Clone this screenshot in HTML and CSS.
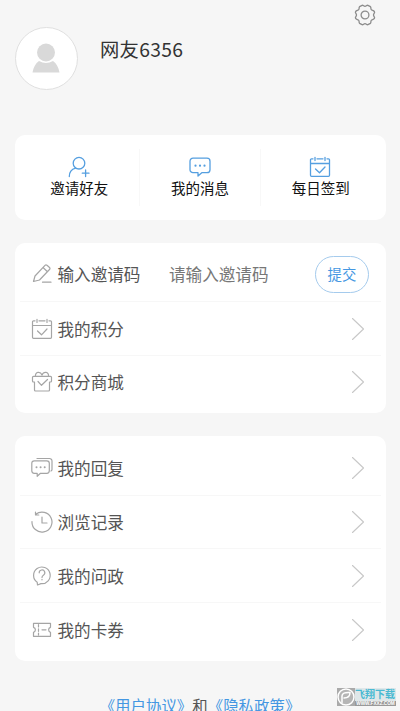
FILE: index.html
```html
<!DOCTYPE html>
<html lang="zh-CN">
<head>
<meta charset="utf-8">
<title>我的</title>
<link rel="stylesheet" href="styles.css">
</head>
<body>
<svg class="defs" width="0" height="0">
  <symbol id="arrow" viewBox="0 0 14 24"><path d="M1.500 1.500 12.500 12 1.500 22.500"/></symbol>
  <symbol id="calendar" viewBox="0 0 22 22"><path d="M4 2.800H2.500a1 1 0 0 0-1 1v15.500a1 1 0 0 0 1 1h17a1 1 0 0 0 1-1V3.800a1 1 0 0 0-1-1H18M8 2.800h6M1.500 7.500h19M6 1.300v3.200M16 1.300v3.200M6.500 13l4 3.800 5.500-5.800"/></symbol>
</svg>
<main class="page">
  <header class="profile">
    <div class="avatar">
      <svg width="28" height="30" viewBox="0 0 28 30"><circle cx="14" cy="9.500" r="9"/><path d="M.5 29.500C1.500 24 3.500 20.500 7 18q7 4 14 0c3.500 2.500 5.500 6 6.500 11.500z"/></svg>
    </div>
    <h1 class="name">网友6356</h1>
    <svg class="settings" width="22" height="22" viewBox="0 0 22 22"><path d="M8.100 1.300C9.500 1 9.600 2.300 11 2.300S12.500 1 13.900 1.300L16.400 2.600C17.300 3.600 16.500 4.300 17.200 5.500 17.900 6.700 19.500 6.200 20.400 7.600 21.300 9 19.500 9.500 19.500 11S21.300 13 20.400 14.400C19.500 15.800 17.900 15.300 17.200 16.500 16.500 17.700 17.300 18.400 16.400 19.400L13.900 20.700C12.500 21 12.400 19.700 11 19.700S9.500 21 8.100 20.700L5.600 19.400C4.700 18.400 5.500 17.700 4.800 16.500 4.100 15.300 2.500 15.800 1.600 14.400.7 13 2.500 12.500 2.500 11S.7 9 1.600 7.600C2.500 6.200 4.100 6.700 4.800 5.500 5.500 4.300 4.700 3.600 5.600 2.600z"/><circle cx="11" cy="11" r="3.900"/></svg>
  </header>

  <section class="card shortcuts">
    <a class="shortcut"><svg width="22" height="22" viewBox="0 0 22 22"><circle cx="11" cy="7.200" r="5.800"/><path d="M1.300 20.500c0-4.500 2.400-7.200 6.200-8.300M14.300 17.200h6.700M17.600 13.900v6.700"/></svg><span>邀请好友</span></a>
    <a class="shortcut"><svg width="22" height="22" viewBox="0 0 22 22"><path d="M4 2.200h14a3 3 0 0 1 3 3v8.500a3 3 0 0 1-3 3h-5.200L9 20v-3.300H4a3 3 0 0 1-3-3V5.200a3 3 0 0 1 3-3z"/><path class="dots" d="M6.500 9.700h.01M11 9.700h.01M15.500 9.700h.01"/></svg><span>我的消息</span></a>
    <a class="shortcut"><svg width="22" height="22"><use href="#calendar"/></svg><span>每日签到</span></a>
  </section>

  <section class="card menu">
    <div class="row">
      <svg class="icon" width="22" height="22" viewBox="0 0 22 22"><path d="M2.500 18.500 4 13 14 2.300q1-1 2 0l2.500 2.200q1 1 0 2L8.500 17zM12 4.500l4.500 4.200M11.500 19.200h8.500"/></svg>
      <span class="label">输入邀请码</span><span class="hint">请输入邀请码</span><button class="submit">提交</button>
    </div>
    <div class="row"><svg class="icon" width="22" height="22"><use href="#calendar"/></svg><span class="label">我的积分</span><svg class="arrow" width="14" height="24"><use href="#arrow"/></svg></div>
    <div class="row"><svg class="icon" width="22" height="22" viewBox="0 0 22 22"><path d="M3.500 11H2.500a1 1 0 0 1-1-1V6.300a1 1 0 0 1 1-1h17a1 1 0 0 1 1 1V10a1 1 0 0 1-1 1h-1M3.500 11v8a1 1 0 0 0 1 1h13a1 1 0 0 0 1-1v-8M4.500 5.300C3.800.5 9.500.3 11 4 12.500.3 18.200.5 17.500 5.300M7 10.500l3.500 3.800 6-5.800"/></svg><span class="label">积分商城</span><svg class="arrow" width="14" height="24"><use href="#arrow"/></svg></div>
  </section>

  <section class="card menu">
    <div class="row"><svg class="icon" width="22" height="22" viewBox="0 0 22 22"><path d="M3.300 3.800h12.500a2.500 2.500 0 0 1 2.500 2.500v7.500a2.500 2.500 0 0 1-2.500 2.500H9.500l-3.300 3v-3H3.300a2.500 2.500 0 0 1-2.500-2.500V6.300a2.500 2.500 0 0 1 2.500-2.500zM6 1.500h12.500A2.500 2.500 0 0 1 21 4v8.500q0 1-1 1.500"/><path class="dots" d="M5.500 10.200h.01M9.600 10.200h.01M13.700 10.200h.01"/></svg><span class="label">我的回复</span><svg class="arrow" width="14" height="24"><use href="#arrow"/></svg></div>
    <div class="row"><svg class="icon" width="22" height="22" viewBox="0 0 22 22"><path d="M1 10.500A10 10 0 1 0 4.800 3.200M4.500 1v3h3.300M11 6v6h5"/></svg><span class="label">浏览记录</span><svg class="arrow" width="14" height="24"><use href="#arrow"/></svg></div>
    <div class="row"><svg class="icon" width="22" height="22" viewBox="0 0 22 22"><path d="M6.200 17.200A8.300 8.300 0 1 1 10 18.600L6.500 20zM8.200 7.800a2.800 2.800 0 1 1 4.200 2.400Q11 11 11 12.500M11 14.300v.5"/></svg><span class="label">我的问政</span><svg class="arrow" width="14" height="24"><use href="#arrow"/></svg></div>
    <div class="row"><svg class="icon" width="22" height="22" viewBox="0 0 22 22"><path d="M2.500 4.300h17v4a2.600 2.600 0 0 0 0 5v4h-17v-4a2.600 2.600 0 0 0 0-5zM7.500 5.500v2.500M7.500 9.800v2.500M7.500 14v2M11 10.800h4"/></svg><span class="label">我的卡券</span><svg class="arrow" width="14" height="24"><use href="#arrow"/></svg></div>
  </section>

  <footer class="legal"><a>《用户协议》</a>和<a>《隐私政策》</a></footer>
</main>
<div class="watermark">
  <svg width="18" height="18" viewBox="0 0 18 18"><circle cx="9" cy="9" r="8"/><path d="M5 14.500V8q0-4 8-3.500Q13 10 7 10"/></svg>
  <div class="mark-text"><span class="brand">飞翔下载</span><span class="site">WWW.FXXZ.COM</span></div>
</div>
</body>
</html>
```
FILE: styles.css
```css
* { box-sizing: border-box; }
html, body { height: 711px; overflow: hidden; }
body {
  margin: 0;
  position: relative;
  background: #f6f6f6;
  color: #555;
  font-family: "Noto Sans CJK SC", sans-serif;
}
svg { display: block; flex: none; fill: none; stroke-linecap: round; stroke-linejoin: round; }
.defs { position: absolute; }
.page { padding: 0 14.5px; }

.profile { display: flex; height: 134.500px; padding-top: 26.500px; align-items: flex-start; }
.avatar {
  width: 63px; height: 63px;
  display: flex; align-items: center; justify-content: center;
  border: 1px solid #e0e0e0; border-radius: 50%;
  background: #fff;
}
.avatar svg { fill: #d9d9d9; }
.name { margin: 8px 0 0 22.500px; font-size: 19.300px; line-height: 29px; font-weight: 400; letter-spacing: .3px; color: #333; }
.settings { margin: -23px 9.500px 0 auto; stroke: #8c8c8c; stroke-width: 1.300; }

.card { background: #fff; border-radius: 10px; }
.shortcuts { display: flex; height: 85.500px; padding: 14px 5px; }
.shortcut {
  flex: 1;
  display: flex; flex-direction: column; align-items: center;
  padding-top: 7.500px;
  font-size: 14.500px; line-height: 20px; color: #111;
}
.shortcut + .shortcut { border-left: 1px solid #f8f8f8; }
.shortcut svg { stroke: #559fe0; stroke-width: 1.300; }
.shortcut:last-child svg { margin-right: 1px; }
.shortcut .dots { stroke-width: 2.200; }

.menu { margin-top: 22.500px; padding: 5px 5px 4.700px; }
.row { display: flex; align-items: center; height: 53.750px; padding: 0 11.500px 0 11px; }
.row + .row { border-top: 1px solid #f7f7f7; }
.icon { stroke: #a5a5a5; stroke-width: 1.200; }
.icon .dots { stroke-width: 2; }
.label { margin-left: 5px; font-size: 16.600px; line-height: 24px; }
.hint { margin-left: 28.500px; font-size: 16.600px; line-height: 24px; color: #777; }
.submit {
  width: 54px; height: 37px; margin-left: auto; padding: 0 0 1px;
  border: 1px solid #a5cbed; border-radius: 19px;
  background: #fff; color: #4497e2;
  font: 14.400px "Noto Sans CJK SC", sans-serif;
}
.arrow { margin-left: auto; margin-right: 4.500px; stroke: #c8c8c8; stroke-width: 1.100; }

.legal { margin-top: 32.500px; font-size: 15.450px; line-height: 24px; text-align: center; white-space: nowrap; }
.legal a { color: #4497e2; }

.watermark {
  position: absolute; right: 4px; bottom: 5px;
  display: flex; align-items: center;
  width: 59px; height: 18px;
  background: linear-gradient(90deg, #aaa 0 18px, #dfe7e9 18px);
}
.watermark svg { fill: #b5b5b5; stroke: #fff; stroke-width: 1.500; }
.mark-text { display: flex; flex-direction: column; width: 41px; height: 18px; justify-content: space-between; }
.brand { font-size: 10px; line-height: 11px; font-weight: 700; color: #48b9d2; white-space: nowrap; }
.site { background: #999; font: 700 4.700px/5px "Liberation Sans", sans-serif; text-align: center; color: #fff; white-space: nowrap; }
```
